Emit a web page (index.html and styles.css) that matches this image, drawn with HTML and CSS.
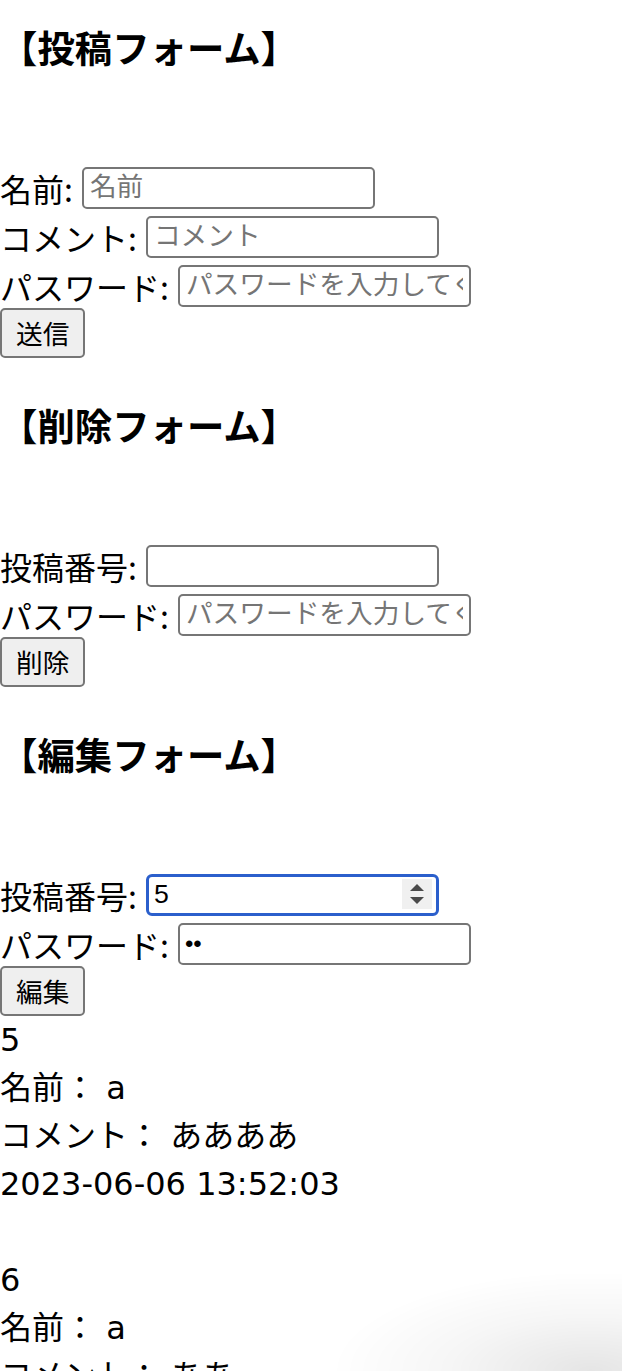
FILE: index.html
```html
<!DOCTYPE html>
<html lang="ja">
<head>
<meta charset="utf-8">
<title>掲示板</title>
<link rel="stylesheet" href="styles.css">
</head>
<body>
<main class="page">
  <section class="section">
    <h3 class="title">【投稿フォーム】</h3>
    <form class="form">
      <label class="row"><span class="label">名前:</span><input class="field" type="text" placeholder="名前"></label>
      <label class="row"><span class="label">コメント:</span><input class="field" type="text" placeholder="コメント"></label>
      <label class="row"><span class="label">パスワード:</span><input class="field" type="text" placeholder="パスワードを入力してください"></label>
      <button class="btn" type="button">送信</button>
    </form>
  </section>

  <section class="section">
    <h3 class="title">【削除フォーム】</h3>
    <form class="form">
      <label class="row"><span class="label">投稿番号:</span><input class="field" type="text"></label>
      <label class="row"><span class="label">パスワード:</span><input class="field" type="text" placeholder="パスワードを入力してください"></label>
      <button class="btn" type="button">削除</button>
    </form>
  </section>

  <section class="section">
    <h3 class="title">【編集フォーム】</h3>
    <form class="form">
      <label class="row"><span class="label">投稿番号:</span>
        <span class="field-wrap">
          <input class="field field-focus" type="text" value="5">
          <span class="spinner" aria-hidden="true"><span class="tri-up"></span><span class="tri-down"></span></span>
        </span>
      </label>
      <label class="row"><span class="label">パスワード:</span><input class="field field-pw" type="password" value="aa"></label>
      <button class="btn" type="button">編集</button>
    </form>
  </section>

  <div class="posts">
    <p class="post">5<br>名前： a<br>コメント： ああああ<br>2023-06-06 13:52:03<br><br></p>
    <p class="post">6<br>名前： a<br>コメント： ああ<br>2023-06-06 13:53:10<br><br></p>
  </div>
</main>
</body>
</html>
```

FILE: styles.css
```css
html, body {
  margin: 0;
  padding: 0;
  background: #ffffff;
}

body {
  color: #000000;
  font-family: "Noto Sans CJK JP", sans-serif;
  font-size: 32px;
  line-height: 48px;
  overflow: hidden;
}

body::after {
  content: "";
  position: fixed;
  left: 0;
  top: 0;
  right: 0;
  bottom: 0;
  pointer-events: none;
  background: radial-gradient(ellipse 260px 100px at 95% 100%, rgba(0, 0, 0, 0.1), rgba(0, 0, 0, 0.035) 55%, rgba(0, 0, 0, 0) 100%);
}

.page {
  display: flex;
  flex-direction: column;
}

.section {
  display: flex;
  flex-direction: column;
  align-items: flex-start;
}

.title {
  margin: 39px 0 88px;
  font-family: "Noto Sans CJK JP", sans-serif;
  font-size: 37.4px;
  line-height: 56px;
  font-weight: 700;
}

.section:first-child .title {
  margin-top: 19px;
}

.form {
  display: flex;
  flex-direction: column;
  align-items: flex-start;
  margin: 0;
}

.row {
  display: flex;
  align-items: center;
  gap: 9px;
  height: 49px;
  line-height: 46px;
}

.label {
  white-space: nowrap;
}

.field {
  box-sizing: border-box;
  width: 293px;
  height: 42px;
  margin: 0;
  padding: 0 6px;
  border: 2px solid #767676;
  border-radius: 5px;
  background: #ffffff;
  color: #000000;
  font-family: "Liberation Sans", "Noto Sans CJK JP", sans-serif;
  font-size: 26.7px;
}

.field::placeholder {
  color: #757575;
  font-family: "Noto Sans CJK JP", sans-serif;
  opacity: 1;
}

.field-wrap {
  position: relative;
  display: flex;
}

.field-focus {
  border: 3px solid #2b5fcc;
  border-radius: 6px;
  outline: none;
  padding: 0 5px;
}

.spinner {
  position: absolute;
  right: 7px;
  top: 5px;
  width: 30px;
  height: 30px;
  background: #f0f0f0;
  display: flex;
  flex-direction: column;
  align-items: center;
  justify-content: center;
  gap: 6px;
}

.tri-up,
.tri-down {
  width: 0;
  height: 0;
  border-left: 7px solid transparent;
  border-right: 7px solid transparent;
}

.tri-up {
  border-bottom: 7px solid #4a4a4a;
}

.tri-down {
  border-top: 7px solid #4a4a4a;
}

.field-pw {
  font-size: 24px;
  letter-spacing: 0;
  padding-left: 5px;
}

.btn {
  box-sizing: border-box;
  margin: -2px 0 0;
  height: 50px;
  padding: 0 14px;
  border: 2px solid #767676;
  border-radius: 5px;
  background: #efefef;
  color: #000000;
  font-family: "Noto Sans CJK JP", sans-serif;
  font-size: 26.7px;
  line-height: 1;
}

.posts {
  display: flex;
  flex-direction: column;
}

.post {
  margin: 0;
  font-family: "DejaVu Sans", "Noto Sans CJK JP", sans-serif;
  font-size: 32px;
  line-height: 48px;
}
```
